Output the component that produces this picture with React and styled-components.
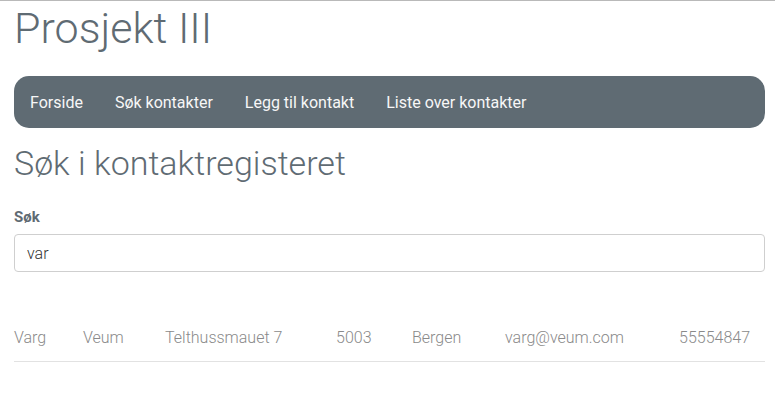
import React from "react";
import styled, { createGlobalStyle } from "styled-components";

const GlobalStyle = createGlobalStyle`
  html, body {
    margin: 0;
    padding: 0;
    background: #fff;
  }
  body {
    border-top: 1px solid #b9b9b9;
    font-family: Roboto, "Liberation Sans", sans-serif;
    font-weight: 300;
    color: #8a8a8a;
  }
`;

const Page = styled.div`
  padding: 0 10px 0 14px;
`;

const Title = styled.h1`
  margin: 0;
  font-size: 43px;
  font-weight: 300;
  line-height: 54px;
  color: #5f6b73;
`;

const Navbar = styled.nav`
  margin-top: 21px;
  height: 52px;
  background: #5f6b73;
  border-radius: 15px;
  display: flex;
  align-items: center;
  padding: 0 16px;
  gap: 32px;
`;

const NavLink = styled.a`
  color: #f7f7f7;
  font-size: 16px;
  font-weight: 400;
  text-decoration: none;
`;

const SubTitle = styled.h2`
  margin: 14px 0 0;
  font-size: 34px;
  font-weight: 300;
  line-height: 42px;
  color: #5f6b73;
`;

const Label = styled.label`
  display: block;
  margin-top: 24px;
  font-size: 15px;
  font-weight: 700;
  color: #5f6b73;
`;

const Input = styled.input`
  display: block;
  box-sizing: border-box;
  width: 100%;
  height: 38px;
  margin-top: 8px;
  padding: 0 12px;
  border: 1px solid #cfcfcf;
  border-radius: 4px;
  font-family: Roboto, "Liberation Sans", sans-serif;
  font-size: 16px;
  font-weight: 300;
  color: #333;
  outline: none;
`;

const Table = styled.table`
  width: 100%;
  margin-top: 41px;
  border-collapse: collapse;
`;

const Cell = styled.td`
  padding: 15px 0 14px;
  font-size: 16px;
  font-weight: 300;
  color: #8a8a8a;
  border-bottom: 1px solid #e2e2e2;
  width: ${({ $w }) => $w || "auto"};
`;

const row = [
  { v: "Varg", w: "69px" },
  { v: "Veum", w: "82px" },
  { v: "Telthussmauet 7", w: "171px" },
  { v: "5003", w: "76px" },
  { v: "Bergen", w: "93px" },
  { v: "varg@veum.com", w: "174px" },
  { v: "55554847" },
];

export default function App() {
  return (
    <>
      <GlobalStyle />
      <Page>
        <Title>Prosjekt III</Title>
        <Navbar>
          <NavLink href="#">Forside</NavLink>
          <NavLink href="#">Søk kontakter</NavLink>
          <NavLink href="#">Legg til kontakt</NavLink>
          <NavLink href="#">Liste over kontakter</NavLink>
        </Navbar>
        <SubTitle>Søk i kontaktregisteret</SubTitle>
        <Label htmlFor="sok">Søk</Label>
        <Input id="sok" defaultValue="var" />
        <Table>
          <tbody>
            <tr>
              {row.map((c) => (
                <Cell key={c.v} $w={c.w}>
                  {c.v}
                </Cell>
              ))}
            </tr>
          </tbody>
        </Table>
      </Page>
    </>
  );
}
